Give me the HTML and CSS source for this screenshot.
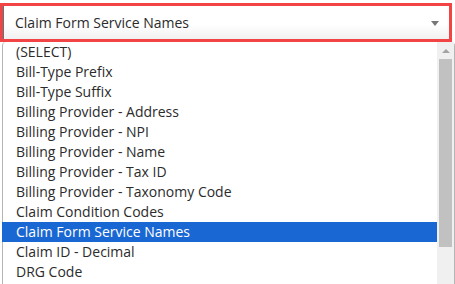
FILE: index.html
```html
<!DOCTYPE html>
<html lang="en">
  <head>
    <meta charset="UTF-8" />
    <meta name="viewport" content="width=device-width, initial-scale=1.0" />
    <title>Claim Form Service Names</title>
    <link rel="stylesheet" href="styles.css">
  </head>
  <body>
    <div class="dropdown">
      <div class="select-box">
        <span class="select-text">Claim Form Service Names</span>
        <span class="caret"></span>
      </div>

      <div class="options">
        <ul class="option-list">
          <li>(SELECT)</li>
          <li>Bill-Type Prefix</li>
          <li>Bill-Type Suffix</li>
          <li>Billing Provider - Address</li>
          <li>Billing Provider - NPI</li>
          <li>Billing Provider - Name</li>
          <li>Billing Provider - Tax ID</li>
          <li>Billing Provider - Taxonomy Code</li>
          <li>Claim Condition Codes</li>
          <li class="valgt">Claim Form Service Names</li>
          <li>Claim ID - Decimal</li>
          <li>DRG Code</li>
        </ul>
        <div class="scrollbar">
          <div class="scroll-up"><span class="up-arrow"></span></div>
          <div class="thumb"></div>
        </div>
      </div>
    </div>
  </body>
</html>
```

FILE: styles.css
```css
body {
  margin: 0;
  background-color: #ffffff;
  font-family: "Open Sans", "Noto Sans", Arial, sans-serif;
  font-size: 14px;
  color: #2b2b2b;
  overflow: hidden;
}

.dropdown {
  width: 455px;
  padding-top: 3px;
}

.select-box {
  display: flex;
  align-items: center;
  justify-content: space-between;
  width: 452px;
  height: 39px;
  box-sizing: border-box;
  border: 3px solid #f24444;
  background: linear-gradient(#ffffff 55%, #f1f1f1);
  box-shadow: inset 1px 0 0 #4f7d7d;
  padding: 0 10px 0 12px;
}

.select-text {
  line-height: 20px;
}

.caret {
  width: 0;
  height: 0;
  border-left: 4px solid transparent;
  border-right: 4px solid transparent;
  border-top: 5px solid #777777;
  margin-top: 1px;
}

.options {
  display: flex;
  margin-left: 2px;
  width: 451px;
  height: 250px;
  border-left: 1px solid #b5b5b5;
  border-right: 1px solid #b5b5b5;
  border-top-left-radius: 4px;
  border-top-right-radius: 4px;
}

.option-list {
  flex: 1;
  list-style: none;
  margin: 0;
  padding: 0;
}

.option-list li {
  height: 20px;
  line-height: 20px;
  padding-left: 13px;
  white-space: nowrap;
}

.option-list li.valgt {
  background-color: #1967d2;
  color: #ffffff;
  margin-left: -1px;
  padding-left: 14px;
}

.scrollbar {
  width: 17px;
  background-color: #f0f0f0;
}

.scroll-up {
  height: 17px;
  display: flex;
  justify-content: center;
  align-items: center;
}

.up-arrow {
  width: 0;
  height: 0;
  border-left: 4px solid transparent;
  border-right: 4px solid transparent;
  border-bottom: 4px solid #a3a3a3;
}

.thumb {
  margin: 0 2px;
  height: 188px;
  background-color: #c1c1c1;
}
```
